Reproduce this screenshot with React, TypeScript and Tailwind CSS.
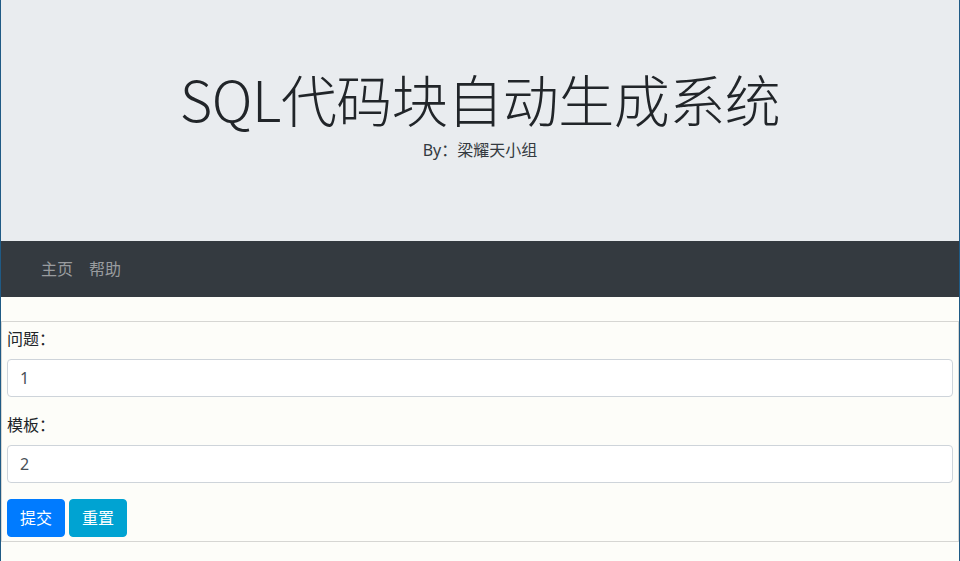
import React from 'react';

const font = { fontFamily: '"Noto Sans", "Noto Sans CJK SC", sans-serif' };

const App = () => {
  return (
    <div
      className="w-[960px] min-h-[561px] bg-[#fdfdf9] border-x border-[#1f5a85] text-[#212529] font-['Noto_Sans','Noto_Sans_CJK_SC',sans-serif]"
      style={font}
    >
      {/* jumbotron */}
      <div className="h-[241px] bg-[#e9ecef] flex flex-col items-center pt-[64px]">
        <h1 className="text-[56px] leading-[67px] font-light text-[#212529] font-['Noto_Sans_CJK_SC',sans-serif] tracking-[-0.5px]">
          SQL代码块自动生成系统
        </h1>
        <p className="mt-[7px] text-base leading-6 text-[#343a40]">By：梁耀天小组</p>
      </div>

      {/* navbar */}
      <nav className="h-[56px] bg-[#343a40] flex items-center pl-[40px] gap-4 text-base">
        <a className="text-[#999c9f]">主页</a>
        <a className="text-[#999c9f]">帮助</a>
      </nav>

      {/* form box */}
      <form className="mt-6 border border-[#d6d6d3] pt-[5px] pb-[4px] px-[5px]">
        <div className="mb-4">
          <label className="block text-base leading-6 mb-2">问题：</label>
          <input
            defaultValue="1"
            className="w-full h-[38px] px-3 border border-[#ced4da] rounded bg-white text-base text-[#495057]"
          />
        </div>
        <div className="mb-4">
          <label className="block text-base leading-6 mb-2">模板：</label>
          <input
            defaultValue="2"
            className="w-full h-[38px] px-3 border border-[#ced4da] rounded bg-white text-base text-[#495057]"
          />
        </div>
        <div className="flex gap-1">
          <button type="button" className="h-[38px] px-3 rounded bg-[#007bff] border border-[#007bff] text-white text-base">
            提交
          </button>
          <button type="button" className="h-[38px] px-3 rounded bg-[#00a3d2] border border-[#00a3d2] text-white text-base">
            重置
          </button>
        </div>
      </form>
    </div>
  );
};

export default App;
